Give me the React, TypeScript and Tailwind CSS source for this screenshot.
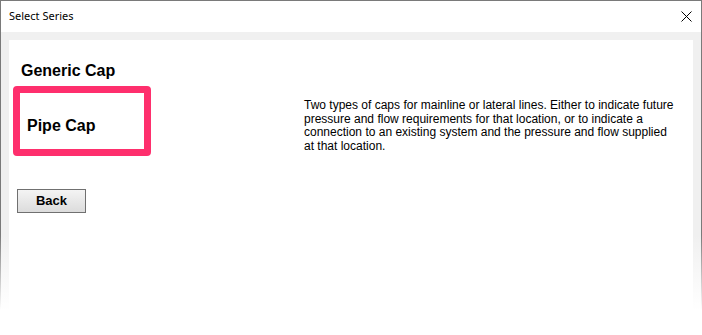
export default function App() {
  return (
    <div className="relative h-[335px] w-[702px] overflow-hidden bg-white">
      <div className="flex h-[335px] flex-col border-x border-t border-[#7a7a7a]">
        <TitleBar />
        <div className="flex flex-1 flex-col bg-[#f0f0f0] pl-[8px] pr-[8px] pt-[8px]">
          <div className="flex-1 bg-white pl-[4px] pt-[22px] font-['Liberation_Sans',Arial,sans-serif] text-black">
            <div className="pl-[8px] text-[16px] font-bold leading-[18px]">Generic Cap</div>
            <div className="mt-[6px] flex items-start">
              <div className="h-[70px] w-[138px] shrink-0 rounded-[4px] border-[7px] border-[#fe2f6d] pl-[7px] pt-[21px]">
                <span className="text-[16px] font-bold leading-[18px]">Pipe Cap</span>
              </div>
              <p className="ml-[153px] mt-[13px] w-[370px] text-[12px] leading-[13.7px]">
                Two types of caps for mainline or lateral lines. Either to indicate future pressure
                and flow requirements for that location, or to indicate a connection to an existing
                system and the pressure and flow supplied at that location.
              </p>
            </div>
            <button className="ml-[4px] mt-[33px] h-[24px] w-[69px] border border-[#707070] bg-gradient-to-b from-[#f4f4f4] to-[#dcdcdc] text-[13px] font-bold leading-[22px]">
              Back
            </button>
          </div>
        </div>
      </div>
      <div className="pointer-events-none absolute inset-x-0 top-[235px] h-[75px] bg-gradient-to-b from-white/0 to-white" />
      <div className="pointer-events-none absolute inset-x-0 top-[310px] h-[25px] bg-white" />
    </div>
  );
}

function TitleBar() {
  return (
    <div className="flex h-[31px] shrink-0 items-center justify-between bg-white pl-[8px] pr-[9px] font-['Noto_Sans',sans-serif] text-[11px] text-black">
      <span>Select Series</span>
      <svg aria-hidden="true" className="size-[11px]" viewBox="0 0 11 11" fill="none">
        <path d="M0.5 0.5l10 10M10.5 0.5l-10 10" stroke="#000" strokeWidth="1" />
      </svg>
    </div>
  );
}
